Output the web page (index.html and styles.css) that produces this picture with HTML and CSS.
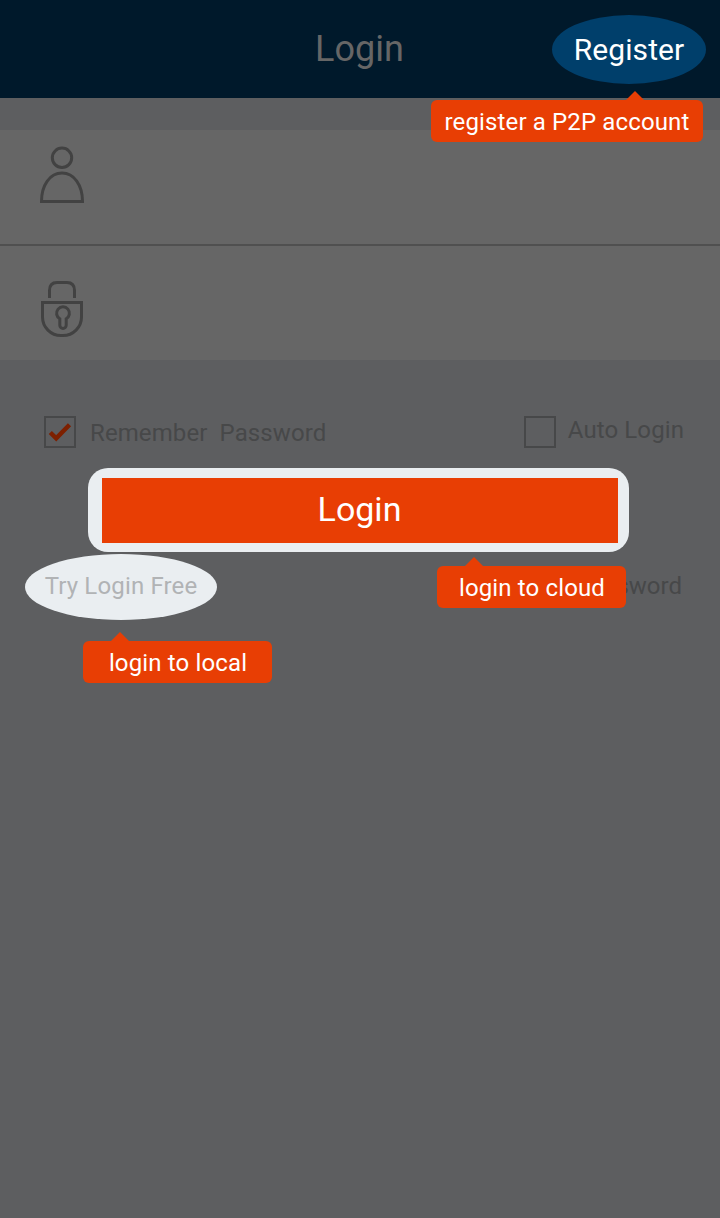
FILE: index.html
```html
<!DOCTYPE html>
<html lang="en">
<head>
<meta charset="utf-8">
<title>Login</title>
<link rel="stylesheet" href="styles.css">
</head>
<body>
<div class="screen">
  <header class="header">
    <h1 class="title">Login</h1>
    <div class="register">
      <span class="register-label">Register</span>
      <div class="tip tip-register"><span>register a P2P account</span></div>
    </div>
  </header>
  <main>
    <div class="fields">
      <div class="field field-user">
        <svg class="icon" width="46" height="58" viewBox="0 0 46 58">
          <circle cx="23" cy="11.8" r="9.7"/>
          <path d="M2.500 55.500C2.500 39 11 27 23 27S43.500 39 43.500 55.500Z"/>
        </svg>
      </div>
      <div class="field field-password">
        <svg class="icon" width="46" height="58" viewBox="0 0 46 58">
          <path d="M10.500 18V10.500Q10.500 2.500 18 2.500H28Q35.500 2.500 35.500 10.500V18"/>
          <path d="M3.500 22.500H42.500V37A18.500 18.500 0 0 1 24 55.500H22A18.500 18.500 0 0 1 3.500 37Z"/>
          <path d="M20.800 38.800A6.400 6.400 0 1 1 27.200 38.800V45.300A3.200 3.200 0 0 1 20.800 45.300Z"/>
        </svg>
      </div>
    </div>
    <div class="options">
      <label class="option">
        <span class="box"><svg width="28" height="28" viewBox="0 0 28 28"><path class="check" d="M4.300 14.500L10.200 20.300L23.500 6.700"/></svg></span>
        <span class="remember-label">Remember  Password</span>
      </label>
      <label class="option">
        <span class="box"></span>
        <span class="auto-label">Auto Login</span>
      </label>
    </div>
    <div class="submit">
      <button class="login" type="button">Login</button>
      <div class="tip tip-cloud"><span>login to cloud</span></div>
    </div>
    <div class="links">
      <div class="try">
        <span class="try-label">Try Login Free</span>
        <div class="tip tip-local"><span>login to local</span></div>
      </div>
      <span class="forgot">sword</span>
    </div>
  </main>
</div>
</body>
</html>
```
FILE: styles.css
```css
* { box-sizing: border-box; }
body {
  margin: 0;
  background: #5d5e60;
  font-family: Roboto, "Liberation Sans", sans-serif;
}
.screen {
  width: 720px;
  height: 1218px;
  overflow: hidden;
  background: #5d5e60;
}
.header {
  display: grid;
  grid-template-columns: 1fr auto 1fr;
  height: 98px;
  background: #00192b;
}
.title {
  grid-column: 2;
  margin: 0;
  padding-right: 1px;
  font-size: 36px;
  font-weight: 400;
  line-height: 98px;
  color: #666;
}
.register {
  position: relative;
  justify-self: end;
  width: 154px;
  height: 69px;
  margin: 15px 14px 0 0;
  border-radius: 50%;
  background: #003f6b;
  color: #fff;
  font-size: 30px;
  letter-spacing: 0.1px;
  line-height: 69px;
  text-align: center;
}
.tip {
  position: absolute;
  z-index: 2;
  width: 189px;
  height: 42px;
  padding-left: 1px;
  border-radius: 6px;
  background: #e83e04;
  color: #fff;
  font-size: 24px;
  letter-spacing: 0.14px;
  line-height: 45px;
  text-align: center;
  white-space: nowrap;
}
.tip::before {
  content: "";
  position: absolute;
  top: -9px;
  border: 9px solid transparent;
  border-top: 0;
  border-bottom-color: #e83e04;
}
.tip-register { right: 3px; top: 85px; width: 272px; padding-left: 0; }
.tip-register::before { left: 194.5px; }
.tip-cloud { left: 349px; top: 98px; }
.tip-cloud::before { left: 27.5px; }
.tip-local { left: 58px; top: 87px; }
.tip-local::before { left: 27.5px; }
.fields {
  margin-top: 32px;
  background: #666;
}
.field {
  display: flex;
  align-items: flex-start;
  padding-left: 39px;
}
.field-user {
  height: 116px;
  padding-top: 16px;
  border-bottom: 2px solid #505050;
}
.field-password {
  height: 114px;
  padding-top: 34px;
}
.icon {
  fill: none;
  stroke: #424242;
  stroke-width: 3;
}
.options {
  display: flex;
  justify-content: space-between;
  height: 108px;
  padding: 56px 36px 0 44px;
  color: #474849;
  font-size: 24px;
  letter-spacing: 0.1px;
}
.option { display: flex; height: 32px; }
.box {
  width: 32px;
  height: 32px;
  border: 2px solid #474849;
}
.box svg { display: block; }
.check {
  fill: none;
  stroke: #7d2000;
  stroke-width: 4.5;
}
.remember-label {
  margin-left: 14px;
  line-height: 34px;
  white-space: pre;
}
.auto-label {
  margin-left: 12px;
  line-height: 28px;
}
.submit {
  position: relative;
  width: 541px;
  height: 84px;
  margin-left: 88px;
  padding: 10px 11px 9px 14px;
  border-radius: 20px;
  background: #eaeef1;
}
.login {
  display: block;
  width: 100%;
  height: 65px;
  padding: 0 1px 2px 0;
  border: 0;
  background: #e83e04;
  color: #fff;
  font: 34px/63px Roboto, "Liberation Sans", sans-serif;
}
.links {
  display: flex;
  justify-content: space-between;
  padding: 2px 38px 0 25px;
  font-size: 24px;
}
.try {
  position: relative;
  width: 192px;
  height: 66px;
  border-radius: 50%;
  background: #eaeef1;
  color: #b1b3b5;
  letter-spacing: 0.15px;
  line-height: 64px;
  text-align: center;
}
.forgot {
  line-height: 64px;
  color: #474849;
}
```
